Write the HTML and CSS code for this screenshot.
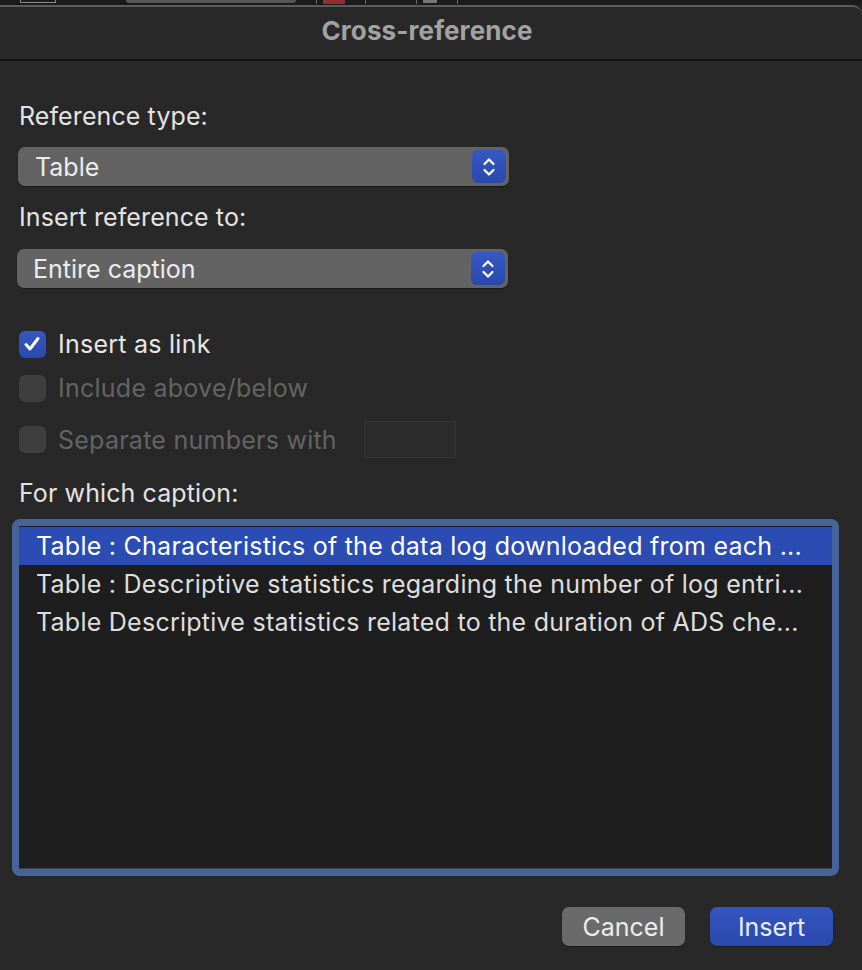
FILE: index.html
```html
<!DOCTYPE html>
<html>
<head>
<meta charset="utf-8">
<link rel="stylesheet" href="styles.css">
</head>
<body>
<div class="topstrip">
  <span class="ts-box"></span>
  <span class="ts-bar"></span>
  <span class="ts-sep"></span>
  <span class="ts-red"></span>
  <span class="ts-sep"></span>
  <span class="ts-gap"></span>
  <span class="ts-sep"></span>
  <span class="ts-grey"></span>
  <span class="ts-sep"></span>
</div>
<div class="dialog">
  <div class="titlebar">Cross-reference</div>
  <div class="content">
    <div class="label l1">Reference type:</div>
    <div class="popup">
      <span class="popup-text">Table</span>
      <span class="stepper">
        <svg width="18" height="24" viewBox="0 0 18 24"><path d="M4.5 9 L9 4.5 L13.5 9 M4.5 15 L9 19.5 L13.5 15" fill="none" stroke="#fff" stroke-width="2.2" stroke-linecap="round" stroke-linejoin="round"/></svg>
      </span>
    </div>
    <div class="label l2">Insert reference to:</div>
    <div class="popup popup2">
      <span class="popup-text">Entire caption</span>
      <span class="stepper">
        <svg width="18" height="24" viewBox="0 0 18 24"><path d="M4.5 9 L9 4.5 L13.5 9 M4.5 15 L9 19.5 L13.5 15" fill="none" stroke="#fff" stroke-width="2.2" stroke-linecap="round" stroke-linejoin="round"/></svg>
      </span>
    </div>
    <div class="check c1">
      <span class="box checked">
        <svg width="26" height="26" viewBox="0 0 26 26"><path d="M7 13.5 L11 18 L19 7.5" fill="none" stroke="#fff" stroke-width="3" stroke-linecap="round" stroke-linejoin="round"/></svg>
      </span>
      <span class="check-text">Insert as link</span>
    </div>
    <div class="check c2 disabled">
      <span class="box"></span>
      <span class="check-text">Include above/below</span>
    </div>
    <div class="check c3 disabled">
      <span class="box"></span>
      <span class="check-text">Separate numbers with</span>
      <span class="numfield"></span>
    </div>
    <div class="label l3">For which caption:</div>
    <div class="listring">
      <div class="list">
        <div class="row selected">Table : Characteristics of the data log downloaded from each ...</div>
        <div class="row">Table : Descriptive statistics regarding the number of log entri...</div>
        <div class="row">Table Descriptive statistics related to the duration of ADS che...</div>
      </div>
    </div>
    <div class="buttons">
      <button class="btn cancel">Cancel</button>
      <button class="btn insert">Insert</button>
    </div>
  </div>
</div>
</body>
</html>
```
FILE: styles.css
```css
* { box-sizing: border-box; }
html, body {
  margin: 0;
  padding: 0;
  background: #282828;
  font-family: Inter, "Noto Sans", "Liberation Sans", sans-serif;
  color: #e3e3e3;
}
body { width: 862px; height: 970px; overflow: hidden; }

.topstrip {
  height: 5px;
  background: #1b1b1b;
  display: flex;
  align-items: flex-start;
}
.ts-box { width: 36px; height: 3px; margin-left: 20px; border: 1px solid #8a8a8a; border-top: none; }
.ts-bar { width: 170px; height: 3px; margin-left: 70px; background: #555; border-radius: 0 0 4px 4px; }
.ts-sep { width: 1px; height: 4px; background: #6a6a6a; margin-left: 20px; }
.ts-red { width: 22px; height: 4px; background: #8e2f33; margin-left: 6px; }
.ts-gap { width: 30px; }
.ts-grey { width: 14px; height: 3px; background: #777; margin-left: 6px; }

.dialog {
  border-top: 2px solid #5c5c5c;
  border-radius: 0 10px 0 0;
  background: #282828;
  height: 963px;
}
.titlebar {
  height: 54px;
  border-bottom: 2px solid #131313;
  text-align: center;
  font-weight: 700;
  font-size: 26px;
  line-height: 48px;
  color: #a2a2a2;
  letter-spacing: 0.1px;
  padding-right: 8px;
}
.content {
  padding: 0 0 0 18px;
  display: flex;
  flex-direction: column;
}
.label {
  height: 26px;
  line-height: 27px;
  font-size: 25px;
  color: #e3e3e3;
  padding-left: 1px;
  letter-spacing: 0.1px;
}
.l1 { margin-top: 42px; }
.l2 { margin-top: 18px; }
.l3 { margin-top: 22px; }

.popup {
  margin-top: 18px;
  width: 491px;
  height: 39px;
  background: #636363;
  border-radius: 7px;
  display: flex;
  align-items: center;
  justify-content: space-between;
  padding: 0 3px 0 17px;
  box-shadow: 0 1px 1px rgba(0,0,0,0.35);
}
.popup2 { margin-top: 19px; margin-left: -1px; width: 491px; padding-left: 16px; }
.popup-text { font-size: 25px; color: #ececec; }
.stepper {
  width: 34px;
  height: 33px;
  border-radius: 6px;
  background: linear-gradient(#3658c4, #2a49ad);
  display: flex;
  align-items: center;
  justify-content: center;
}

.check {
  display: flex;
  align-items: center;
  height: 26px;
}
.c1 { margin-top: 43px; }
.c2 { margin-top: 18px; }
.c3 { margin-top: 20px; height: 37px; }
.box {
  width: 27px;
  height: 27px;
  border-radius: 6px;
  background: #464646;
  margin-left: 1px;
  flex: none;
}
.box.checked {
  background: linear-gradient(#3658c4, #2a49ad);
}
.box.checked svg { display: block; }
.check-text {
  margin-left: 12px;
  font-size: 25px;
  color: #e6e6e6;
  letter-spacing: 0.25px;
}
.disabled .check-text { color: #646464; }
.disabled .box { background: #3e3e3e; }
.numfield {
  margin-left: 27px;
  width: 92px;
  height: 37px;
  background: #2c2c2c;
  border: 1px solid #343434;
}

.listring {
  margin-top: 13px;
  margin-left: -6px;
  width: 827px;
  height: 357px;
  border: 7px solid #46649a;
  border-radius: 8px;
  background: #1e1e1e;
}
.list {
  height: 100%;
  background: #1e1e1e;
  padding-top: 1px;
  border-bottom: 1px solid #3a4150;
}
.row {
  height: 38px;
  line-height: 39px;
  padding-left: 17px;
  font-size: 25px;
  color: #dedede;
  white-space: nowrap;
  overflow: hidden;
  letter-spacing: 0.25px;
}
.row.selected {
  background: #2a4cb3;
  color: #ffffff;
}

.buttons {
  margin-top: 31px;
  display: flex;
  justify-content: flex-end;
  gap: 25px;
  padding-right: 29px;
}
.btn {
  width: 123px;
  height: 39px;
  border: none;
  border-radius: 7px;
  font-family: inherit;
  font-size: 25px;
  color: #ececec;
  padding: 0;
  box-shadow: 0 1px 1px rgba(0,0,0,0.35);
}
.cancel { background: #6a6a6a; }
.insert { background: linear-gradient(#3456c0, #2a49ad); color: #e8ecf8; }
```
